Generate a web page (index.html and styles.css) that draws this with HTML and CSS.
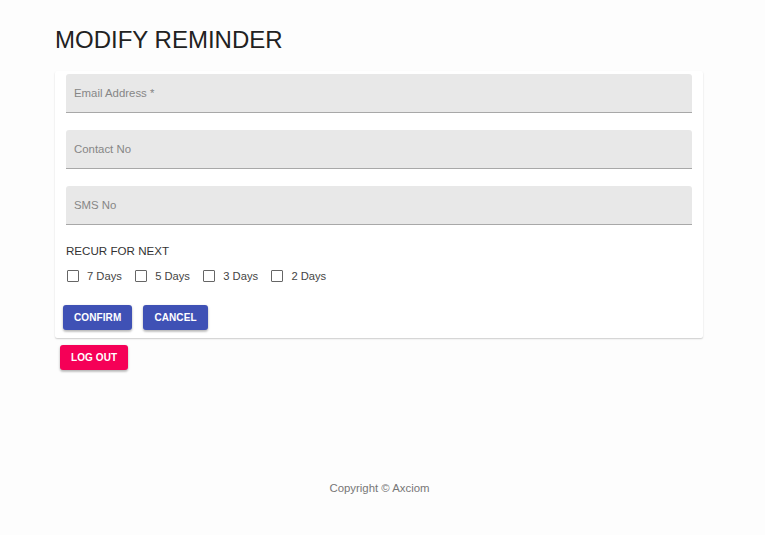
FILE: index.html
```html
<!DOCTYPE html>
<html>
<head>
<meta charset="utf-8">
<link rel="stylesheet" href="styles.css">
</head>
<body>
<div class="page">
  <h1 class="title">MODIFY REMINDER</h1>
  <div class="card">
    <div class="field"><span class="label">Email Address *</span></div>
    <div class="field"><span class="label">Contact No</span></div>
    <div class="field"><span class="label">SMS No</span></div>
    <div class="recur">RECUR FOR NEXT</div>
    <div class="checks">
      <label class="check"><span class="box"></span>7 Days</label>
      <label class="check"><span class="box"></span>5 Days</label>
      <label class="check"><span class="box"></span>3 Days</label>
      <label class="check"><span class="box"></span>2 Days</label>
    </div>
    <div class="actions">
      <button class="btn primary">CONFIRM</button>
      <button class="btn primary">CANCEL</button>
    </div>
  </div>
  <button class="btn secondary logout">LOG OUT</button>
</div>
<footer class="footer">Copyright © Axciom</footer>
</body>
</html>
```
FILE: styles.css
```css
html, body {
  margin: 0;
  background: #fdfdfd;
  font-family: "Liberation Sans", Arial, sans-serif;
}
.page {
  padding: 26px 62px 0 55px;
}
.title {
  margin: 0;
  font-size: 24px;
  line-height: 28px;
  font-weight: 400;
  color: #222;
}
.card {
  margin-top: 17px;
  background: #fff;
  box-shadow: 0 1px 2px rgba(0,0,0,0.12), 0 1px 1px rgba(0,0,0,0.08);
  border-radius: 2px;
  padding: 3px 11px 8px 11px;
  display: flex;
  flex-direction: column;
}
.field {
  height: 38px;
  background: #e8e8e8;
  border-bottom: 1px solid #a8a8a8;
  border-radius: 3px 3px 0 0;
  display: flex;
  align-items: center;
  padding-left: 8px;
  margin-bottom: 17px;
}
.label {
  font-size: 11.4px;
  color: #868686;
}
.recur {
  margin-top: 2px;
  font-size: 11.6px;
  color: #333;
  line-height: 14px;
}
.checks {
  display: flex;
  gap: 13.3px;
  margin-top: 11px;
  padding-left: 1px;
}
.check {
  display: flex;
  align-items: center;
  font-size: 11.2px;
  line-height: 14px;
  color: #444;
}
.box {
  width: 10px;
  height: 10px;
  border: 1px solid #666;
  border-radius: 1px;
  margin-right: 8px;
}
.actions {
  display: flex;
  gap: 11px;
  margin-top: 22px;
  margin-left: -3px;
}
.btn {
  font-family: "Liberation Sans", Arial, sans-serif;
  font-size: 10px;
  font-weight: 700;
  color: #fff;
  border: none;
  border-radius: 3px;
  height: 25px;
  padding: 0 11px;
  box-shadow: 0 1px 3px rgba(0,0,0,0.2), 0 2px 2px rgba(0,0,0,0.14);
  letter-spacing: 0.1px;
}
.primary {
  background: #3f51b5;
}
.secondary {
  background: #f50057;
}
.logout {
  margin-top: 7px;
  margin-left: 5px;
  padding: 0 11px;
}
.footer {
  margin-top: 112px;
  text-align: center;
  font-size: 11.4px;
  color: #777;
  padding-right: 6px;
}
```
